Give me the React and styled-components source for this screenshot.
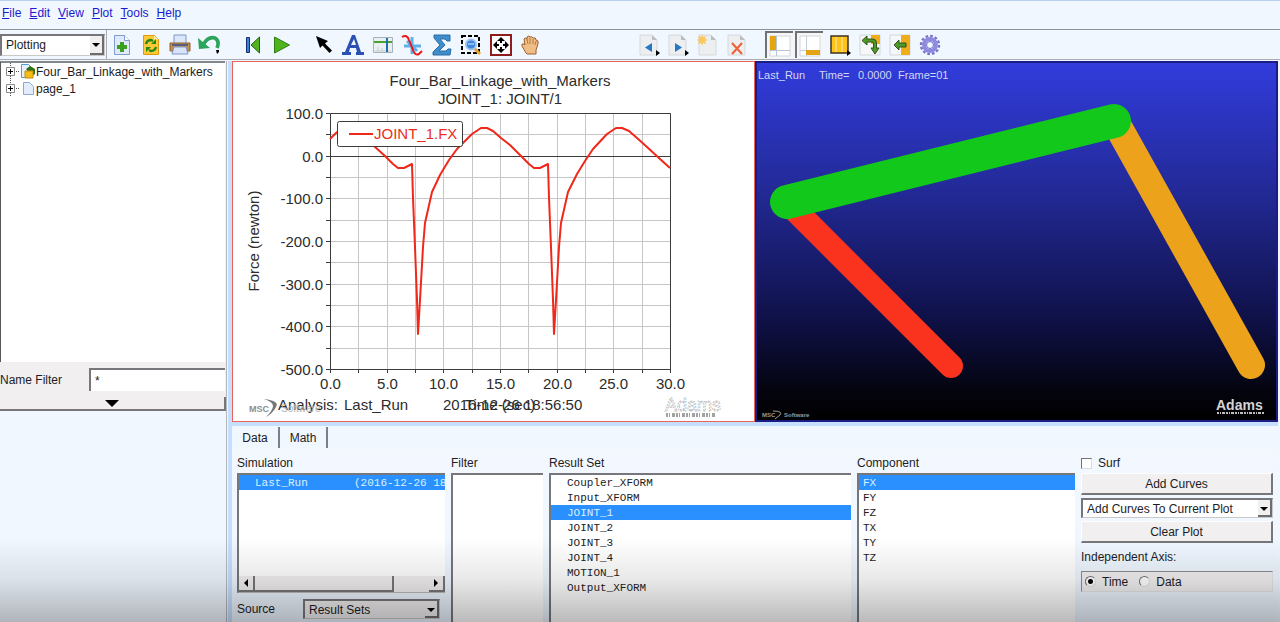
import React, { useState } from "react";
import styled, { createGlobalStyle } from "styled-components";

const GlobalStyle = createGlobalStyle`
  *, *::before, *::after { box-sizing: border-box; }
  body { margin: 0; background: #f0f7ff; }
  body, button, input, select {
    font-family: "Liberation Sans", Arial, sans-serif;
    font-size: 12px;
    color: #1c1c24;
  }
  ul { list-style: none; margin: 0; padding: 0; }
`;

const Page = styled.div`
  position: relative;
  display: flex;
  flex-direction: column;
  min-height: 100vh;
  overflow: hidden;
  background: #f0f7ff;
`;

const BottomShade = styled.div`
  position: absolute;
  left: 0;
  right: 0;
  bottom: 0;
  height: 84px;
  pointer-events: none;
  background: linear-gradient(rgba(0, 0, 0, 0), rgba(0, 0, 0, 0.09) 50%, rgba(0, 0, 0, 0.27));
`;

/* ---------- menu and toolbar ---------- */

const MenuBar = styled.nav`
  display: flex;
  gap: 8px;
  height: 29px;
  padding: 5px 2px 0;
  border-top: 1px solid #b9cfee;
`;

const MenuLink = styled.a`
  color: #1a1ad0;
  line-height: 14px;
  text-decoration: none;
`;

const Toolbar = styled.div`
  display: flex;
  align-items: center;
  height: 31px;
  margin-bottom: 1px;
  border-top: 1px solid #8e9299;
  border-bottom: 1px solid #a9adb3;
`;

const ToolGroup = styled.div`
  flex: none;
  display: grid;
  grid-template-columns: repeat(${(p) => p.$count}, 1fr);
  width: ${(p) => p.$width}px;
  height: 29px;
  margin-left: ${(p) => p.$gap}px;
  border-left: ${(p) => (p.$ruled ? "1px solid #a9adb3" : "0")};
`;

const ToolButton = styled.button`
  display: flex;
  align-items: center;
  justify-content: center;
  height: 27px;
  margin: ${(p) => (p.$pressed ? "1px 2px 0 0" : "1px 0 0")};
  padding: 0;
  border: 0 solid #707276;
  border-width: ${(p) => (p.$pressed ? "2px 0 0 2px" : "0")};
  background: ${(p) => (p.$pressed ? "#f6f6f6" : "transparent")};
`;

const SelectFrame = styled.span`
  position: relative;
  display: block;
  flex: none;
  width: ${(p) => p.$width};
  height: ${(p) => p.$height}px;
  border: 1px solid #c9c9c9;
  border-top: 2px solid #77777b;
  border-left: 2px solid #77777b;
  background: ${(p) => p.$fill || "#fff"};
  &::after {
    content: "";
    position: absolute;
    top: 0;
    right: 0;
    bottom: 0;
    width: 14px;
    pointer-events: none;
    border-right: 2px solid #6d6d70;
    border-bottom: 2px solid #6d6d70;
    background: #f1eff0;
  }
`;

const SelectArrow = styled.span`
  position: absolute;
  z-index: 1;
  top: 50%;
  right: 4px;
  margin-top: -2px;
  border: 4px solid transparent;
  border-top-color: #000;
  border-bottom: 0;
  pointer-events: none;
`;

const NativeSelect = styled.select`
  display: block;
  appearance: none;
  width: 100%;
  height: 100%;
  padding: 0 16px 0 4px;
  border: 0;
  border-radius: 0;
  outline: 0;
  background: transparent;
`;

/* ---------- main frame ---------- */

const Main = styled.div`
  flex: 1;
  display: flex;
  padding-right: 2px;
`;

const Sidebar = styled.aside`
  flex: none;
  display: flex;
  flex-direction: column;
  width: 227px;
  border-right: 1px solid #b4b7bc;
`;

const Work = styled.main`
  flex: 1;
  min-width: 0;
  display: flex;
  flex-direction: column;
  border-left: 4px solid #c6dfff;
  margin-left: 1px;
`;

const Tree = styled.ul`
  height: 301px;
  margin-right: 1px;
  border-top: 2px solid #85878a;
  border-left: 1px solid #55575a;
  background: #fff;
`;

const TreeRow = styled.li`
  display: flex;
  align-items: center;
  height: 17px;
  padding-left: 5px;
  white-space: nowrap;
`;

const FilterRow = styled.label`
  display: flex;
  align-items: center;
  justify-content: space-between;
  height: 35px;
  padding-right: 1px;
  background: #f1eff0;
`;

const FilterInput = styled.input`
  width: 136px;
  height: 23px;
  padding: 0 4px;
  border: 0 solid #77777b;
  border-width: 2px 0 0 2px;
  outline: 0;
  background: #fff;
`;

const CollapseButton = styled.button`
  display: flex;
  align-items: center;
  justify-content: center;
  height: 14px;
  padding: 0;
  border: 0 solid #77777b;
  border-width: 0 2px 2px 0;
  background: #f1eff0;
`;

const Views = styled.div`
  display: grid;
  grid-template-columns: 1fr 1fr;
  border-bottom: 4px solid #c6dfff;
`;

const PlotView = styled.section`
  height: 361px;
  border: 1px solid #e8645a;
  background: #fff;
`;

const AnimationView = styled.section`
  height: 361px;
  border: 2px solid #1c1c86;
  background: linear-gradient(#313cdc, #232a98 35%, #10124c 70%, #04040f 92%, #000);
`;

const Drawing = styled.svg`
  display: block;
  width: 100%;
  height: 100%;
  font-family: "Liberation Sans", Arial, sans-serif;
`;

/* ---------- data panel ---------- */

const Tabs = styled.div`
  display: flex;
  height: 24px;
  padding: 1px 0 2px;
`;

const Tab = styled.button`
  width: 48px;
  padding: 1px 0 0;
  border: 0;
  border-right: 2px solid #7d8086;
  background: transparent;
`;

const DataGrid = styled.div`
  flex: 1;
  display: grid;
  grid-template-columns: 208fr 92fr 302fr 218fr 192fr;
  gap: 6px;
  padding: 6px 5px 0;
  background: linear-gradient(#f3f8ff, #ecf5ff);
`;

const Column = styled.div`
  display: flex;
  flex-direction: column;
  gap: 3px;
  min-width: 0;
`;

const ColumnTitle = styled.div`
  line-height: 14px;
`;

const ListBox = styled.ul`
  flex: ${(p) => (p.$fill ? "1" : "none")};
  height: ${(p) => (p.$fill ? "auto" : "103px")};
  overflow: hidden;
  border: 0 solid #77777b;
  border-width: 2px 0 0 2px;
  background: #fff;
`;

const ListItem = styled.li`
  height: 15px;
  padding-left: ${(p) => p.$indent}px;
  overflow: hidden;
  font: 11px/17px "Liberation Mono", "Courier New", monospace;
  white-space: pre;
  color: ${(p) => (p.$selected ? "#d9f0ff" : "#1c1c24")};
  background: ${(p) => (p.$selected ? "#2a90ff" : "transparent")};
`;

const ScrollTrack = styled.div`
  display: flex;
  height: 17px;
  border-left: 2px solid #77777b;
  border-bottom: 1px solid #b8b8b8;
  background: #f1eff0;
`;

const ScrollButton = styled.button`
  display: flex;
  align-items: center;
  justify-content: center;
  width: 16px;
  padding: 0;
  border: 0 solid #77777b;
  border-width: 0 2px 2px 0;
  background: #f1eff0;
`;

const ScrollSpace = styled.div`
  flex: 1;
`;

const ScrollThumb = styled.div`
  width: 80%;
  height: 16px;
  border: 0 solid #77777b;
  border-width: 0 2px 2px 0;
`;

const SourceRow = styled.label`
  display: flex;
  align-items: center;
  justify-content: space-between;
  padding: 3px 5px 0 0;
`;

const PushButton = styled.button`
  height: 22px;
  padding: 0;
  border: 1px solid #fdfdfd;
  border-right: 2px solid #77777b;
  border-bottom: 2px solid #77777b;
  background: #f1eff0;
`;

const Stack = styled.div`
  display: flex;
  flex-direction: column;
  gap: 3px;
`;

const CheckLabel = styled.label`
  display: flex;
  align-items: center;
  gap: 6px;
  height: 14px;
`;

const CheckInput = styled.input`
  appearance: none;
  width: 11px;
  height: 11px;
  margin: 0;
  border: 1px solid #dcdcdc;
  border-top-color: #707276;
  border-left-color: #707276;
  background: #fff;
  &:checked { background: #333; }
`;

const AxisSet = styled.fieldset`
  min-width: 0;
  margin: 4px 0 0;
  padding: 0;
  border: 0;
`;

const AxisLegend = styled.legend`
  padding: 0 0 7px;
  line-height: 14px;
`;

const AxisOptions = styled.div`
  display: flex;
  align-items: center;
  gap: 11px;
  height: 21px;
  padding-left: 3px;
  border: 1px solid #e4e4e4;
  border-top-color: #8b8d92;
  border-left-color: #8b8d92;
  background: #f1eff0;
`;

const RadioInput = styled.input`
  appearance: none;
  width: 11px;
  height: 11px;
  margin: 0;
  border: 1px solid #e0e0e0;
  border-top-color: #707276;
  border-left-color: #707276;
  border-radius: 50%;
  background: #fff;
  &:checked { background: radial-gradient(circle, #000 0 2px, #fff 3px); }
`;

/* ---------- toolbar icons ---------- */

const Icon = ({ children }) => (
  <svg width="22" height="22" viewBox="0 0 22 22" fill="none" aria-hidden="true">
    {children}
  </svg>
);

const more = <path d="M18 16l4 3-4 3z" fill="#000" />;
const greySheet = (
  <>
    <path d="M2 1h12l5 5v15H2z" fill="#eceef0" stroke="#d6d9dc" />
    <path d="M14 1v5h5z" fill="#b9bdc2" />
  </>
);

const icons = {
  newPage: (
    <Icon>
      <path d="M3.500 1.500h10l5 5v14h-15z" fill="#dfe9fb" stroke="#7e9cd0" />
      <path d="M13.500 1.500v5h5" fill="#fff" stroke="#7e9cd0" />
      <path d="M9 8h4v3h3v4h-3v3H9v-3H6v-4h3z" fill="#38a01c" />
    </Icon>
  ),
  reload: (
    <Icon>
      <path d="M3.500 1.500h11l4 4v15h-15z" fill="#ffc935" stroke="#e09a10" />
      <path d="M14 1.500v4h4.500z" fill="#fff1bf" />
      <path d="M6 10q1-4 5-4l2 1M16 13q-1 4-5 4l-2-1" stroke="#278a16" strokeWidth="2.400" />
      <path d="M11 10l5 0V5zM11 13H6v5z" fill="#278a16" />
    </Icon>
  ),
  print: (
    <Icon>
      <path d="M5 1h12v9H5z" fill="#dce6fa" stroke="#7e97c4" />
      <path d="M1 9h20v8H1z" fill="#c58d4e" stroke="#8a6236" />
      <path d="M3 11h16" stroke="#54617c" strokeWidth="2" />
      <path d="M5 13h12l2 7H3z" fill="#d7e4fb" stroke="#7e97c4" />
    </Icon>
  ),
  undo: (
    <Icon>
      <path d="M5 11Q10 2 17 4q5 3 2 10" stroke="#2ca45c" strokeWidth="3.600" />
      <path d="M0 4l1 11 11-1z" fill="#2ca45c" />
      <path d="M18 16h3v2l-2 2z" fill="#000" />
    </Icon>
  ),
  rewind: (
    <Icon>
      <path d="M4.500 3.500h3v15h-3z" fill="#3b82d8" stroke="#15306e" />
      <path d="M17.500 3v16L9 11z" fill="#52b31f" stroke="#24610c" />
    </Icon>
  ),
  play: (
    <Icon>
      <path d="M3.500 3v16l15-8z" fill="#4fb31c" stroke="#2f7d12" />
    </Icon>
  ),
  pointer: (
    <Icon>
      <path d="M3 2l4 12 2.500-2.500 7 7.500 2.500-2.500-7-7L15 7z" fill="#000" />
    </Icon>
  ),
  text: (
    <Icon>
      <path
        fillRule="evenodd"
        d="M10 1h3l6 17h3v3h-8v-3h1l-1-4H8l-1 4h2v3H0v-3h3zM9 11h5l-2-6z"
        fill="#2c4fb4"
      />
    </Icon>
  ),
  table: (
    <Icon>
      <path d="M1.500 3.500h19v15h-19z" fill="#eaf0f2" stroke="#a7b2ba" />
      <path d="M6 13v4M10 14v3M3 17h16" stroke="#c2cbce" />
      <path d="M2 8h18" stroke="#4ba32c" strokeWidth="2" />
      <path d="M15 4v14" stroke="#1f6db4" strokeWidth="2" />
    </Icon>
  ),
  curve: (
    <Icon>
      <path d="M11 3v17M3 12h17M6 7l10 10" stroke="#5fb0e8" strokeWidth="3" />
      <path d="M1 3q5-3 7 3l4 10q2 6 6 4l3-3" stroke="#e81818" strokeWidth="2" />
    </Icon>
  ),
  sigma: (
    <Icon>
      <path
        d="M3 1h16v6h-3l-2-2H9l5 6-6 6h7l2-2h3l-1 6H2v-3l7-7-6-7z"
        fill="#3f8dca"
        stroke="#2a6da8"
      />
    </Icon>
  ),
  zoom: (
    <Icon>
      <path d="M2 2h17v17H2z" stroke="#000" strokeWidth="2" strokeDasharray="4 2" />
      <path d="M14 14l6 6" stroke="#e7a437" strokeWidth="3" />
      <circle cx="11" cy="10.500" r="5" fill="#3f86dc" stroke="#9cc3ee" strokeWidth="2" />
      <path d="M8 10h6" stroke="#8dbcf2" strokeWidth="2" />
    </Icon>
  ),
  fit: (
    <Icon>
      <path d="M1 1h20v20H1z" fill="#fff" stroke="#8e1c1c" strokeWidth="2" />
      <path
        d="M11 3l4 4h-3v2h-2V7H7zM11 19l4-4h-3v-2h-2v2H7zM3 11l4-4v3h2v2H7v3zM19 11l-4-4v3h-2v2h2v3z"
        fill="#000"
      />
    </Icon>
  ),
  hand: (
    <Icon>
      <path
        d="M7 19l-4-7q-1-3 2-2l1 1-1-6q1-2 3 0l0-2q2-2 3 0 2-1 3 1 3-1 3 2 3 0 2 4l-2 6v4H8z"
        fill="#f0bd84"
        stroke="#9a6230"
      />
      <path d="M8 5l1 5M11 4v6M14 5v5M17 7l-1 4" stroke="#b27b45" />
    </Icon>
  ),
  pagePrev: (
    <Icon>
      {greySheet}
      <path d="M14 9v9l-7-4.500z" fill="#2379c4" />
      {more}
    </Icon>
  ),
  pageNext: (
    <Icon>
      {greySheet}
      <path d="M8 9v9l7-4.500z" fill="#2379c4" />
      {more}
    </Icon>
  ),
  pageNew: (
    <Icon>
      {greySheet}
      <path d="M5 0l1 3 3-1-1 3 3 1-3 1 1 3-3-1-1 3-1-3-3 1 1-3-3-1 3-1-1-3 3 1z" fill="#f8c95c" />
    </Icon>
  ),
  pageDelete: (
    <Icon>
      {greySheet}
      <path d="M6 9l10 11M16 9L6 20" stroke="#ee6135" strokeWidth="2" />
    </Icon>
  ),
  paneLeft: (
    <Icon>
      <path d="M1 1h20v20H1z" fill="#fff" stroke="#d2d7dc" />
      <path d="M1 1h6v14H1z" fill="#e5a414" />
      <path d="M7.500 1v20M1 15.500h20" stroke="#b6c6d6" />
    </Icon>
  ),
  paneBottom: (
    <Icon>
      <path d="M1 1h20v20H1z" fill="#fff" stroke="#d2d7dc" />
      <path d="M7.500 1v20M1 15.500h20" stroke="#c3d0dc" />
      <path d="M7 15h14v5H7z" fill="#e5a414" />
    </Icon>
  ),
  layout: (
    <Icon>
      <path d="M2 2h17v17H2z" fill="#ffc21a" stroke="#3c3423" strokeWidth="1.500" />
      <path d="M7 3v15M13 3v15" stroke="#ffd763" strokeWidth="2" />
      {more}
    </Icon>
  ),
  swap: (
    <Icon>
      <path d="M1 1h20v20H1z" fill="#f5f7f8" stroke="#d2d7dc" />
      <path d="M12 1h9v9h-9z" fill="#efad1c" />
      <path d="M7 6.500h6q3 0 3 3V15" stroke="#33551b" strokeWidth="4" />
      <path d="M8 2v9L3 6.500zM12 14h8l-4 6z" fill="#4c9a28" stroke="#33551b" />
      <path d="M7 6.500h6q3 0 3 3V15" stroke="#4c9a28" strokeWidth="2" />
    </Icon>
  ),
  moveLeft: (
    <Icon>
      <path d="M1 1h20v20H1z" fill="#f5f7f8" stroke="#d2d7dc" />
      <path d="M12 1h9v20h-9z" fill="#efad1c" />
      <path d="M5 11l5-5v3h7v4h-7v3z" fill="#4c9a28" stroke="#33551b" />
    </Icon>
  ),
  gear: (
    <Icon>
      <circle cx="11" cy="11" r="9" stroke="#7672cc" strokeWidth="2.400" strokeDasharray="2.700 2" />
      <circle cx="11" cy="11" r="6" stroke="#8d8ae0" strokeWidth="4" />
      <circle cx="11" cy="11" r="3.500" fill="#f0f7ff" stroke="#6d69c4" />
    </Icon>
  ),
};

const toolGroups = [
  { width: 118, gap: 1, ruled: true, tools: [["newPage", "New"], ["reload", "Reload"], ["print", "Print"], ["undo", "Undo"]] },
  { width: 59, gap: 14, tools: [["rewind", "Rewind"], ["play", "Play"]] },
  {
    width: 236,
    gap: 12,
    tools: [
      ["pointer", "Select"], ["text", "Text"], ["table", "Plot tracking"], ["curve", "Curve edit"],
      ["sigma", "Statistics"], ["zoom", "Zoom"], ["fit", "Fit"], ["hand", "Pan"],
    ],
  },
  {
    width: 118,
    gap: 89,
    tools: [["pagePrev", "Previous page"], ["pageNext", "Next page"], ["pageNew", "New page"], ["pageDelete", "Delete page"]],
  },
  {
    width: 180,
    gap: 13,
    tools: [
      ["paneLeft", "Tree pane", true], ["paneBottom", "Data pane", true], ["layout", "Page layout"],
      ["swap", "Swap views"], ["moveLeft", "Expand view"], ["gear", "Settings"],
    ],
  },
];

const MenuItem = ({ name }) => (
  <MenuLink href={`#${name.toLowerCase()}`}>
    <u>{name[0]}</u>
    {name.slice(1)}
  </MenuLink>
);

const Select = ({ options, label, width = "100%", height = 20, fill, id }) => (
  <SelectFrame $width={width} $height={height} $fill={fill}>
    <NativeSelect id={id} aria-label={label}>
      {options.map((o) => (
        <option key={o}>{o}</option>
      ))}
    </NativeSelect>
    <SelectArrow />
  </SelectFrame>
);

/* ---------- tree ---------- */

const TreeGlyph = ({ model }) => (
  <svg width="30" height="17" viewBox="0 0 30 17" fill="none" aria-hidden="true">
    <path d="M4.500 0v4M4.500 13v4M10 8.500h4" stroke="#555" strokeDasharray="1 1" />
    <path d="M.5 4.500h8v8h-8z" fill="#fff" stroke="#8a8a8a" />
    <path d="M2 8.500h5M4.500 6v5" stroke="#000" />
    {model ? (
      <>
        <path d="M15.500 1.500h7l4 4v9h-11z" fill="#e7f1fd" stroke="#4f9ad8" />
        <path d="M20 6l4-3 5 3v5l-3 2z" fill="#2f6f1c" />
        <path d="M19 8h8v7h-8z" fill="#f4bd12" stroke="#c78c08" />
      </>
    ) : (
      <path d="M17.500 2.500h6l4 4v8h-10z" fill="#e3ecfb" stroke="#8fa9d6" />
    )}
  </svg>
);

/* ---------- force plot ---------- */

const forceCurve = [
  [330, 139], [336, 133], [342, 128], [349, 128], [359, 134], [374, 146], [385, 156], [393, 164],
  [398, 168], [404, 168], [408, 166], [412, 164], [413, 198], [415, 247], [417, 300], [418, 334],
  [420, 300], [423, 247], [425, 223], [432, 192], [440, 175], [449, 160], [457, 149], [463, 143],
  [472, 134], [481, 128], [487, 128], [493, 131], [501, 138], [510, 145], [521, 156], [529, 164],
  [534, 168], [540, 168], [544, 166], [548, 164], [549, 198], [551, 247], [553, 300], [554, 334],
  [556, 300], [559, 247], [561, 223], [568, 192], [577, 174], [585, 161], [593, 149], [607, 134],
  [616, 128], [622, 128], [629, 131], [637, 138], [647, 147], [660, 159], [670, 168],
];

const xAt = (v) => Math.round(330 + (v * 340) / 30) + 0.5;
const yAt = (v) => Math.round(113 + ((100 - v) * 256) / 600) + 0.5;
const xSteps = Array.from({ length: 13 }, (_, i) => i * 2.5);
const ySteps = Array.from({ length: 13 }, (_, i) => 100 - i * 50);

const ForcePlot = () => (
  <Drawing viewBox="233 62 521 359" role="img" aria-label="Force plot of JOINT_1">
    <g stroke="#c6c6c6">
      {xSteps.map((v) => <path key={v} d={`M${xAt(v)} 113V369`} />)}
      {ySteps.map((v) => <path key={v} d={`M330 ${yAt(v)}H670`} />)}
    </g>
    <g stroke="#3c3c3c" fill="none">
      <path d="M330.500 113.500H670.500V369.500H330.500z" />
      <path d="M330 156.500H670" />
      {xSteps.map((v) => <path key={v} d={`M${xAt(v)} 369v4`} />)}
      {ySteps.map((v) => <path key={v} d={`M326 ${yAt(v)}h4`} />)}
    </g>
    <polyline points={forceCurve.join(" ")} fill="none" stroke="#f0281a" strokeWidth="2" strokeLinejoin="round" />
    <rect x="337.500" y="121.500" width="125" height="25" rx="2" fill="#fff" stroke="#3c3c3c" />
    <path d="M349 134h24" stroke="#f0281a" strokeWidth="2" />
    <g fontSize="15" fill="#2c2c2c">
      <text x="374" y="139" fill="#e8301f">JOINT_1.FX</text>
      <text x="500" y="86" textAnchor="middle">Four_Bar_Linkage_with_Markers</text>
      <text x="500" y="104" textAnchor="middle">JOINT_1: JOINT/1</text>
      {ySteps.filter((v) => v % 100 === 0).map((v) => (
        <text key={v} x="323" y={yAt(v) + 5} textAnchor="end">{v.toFixed(1)}</text>
      ))}
      {xSteps.filter((v) => v % 5 === 0).map((v) => (
        <text key={v} x={xAt(v)} y="389" textAnchor="middle">{v.toFixed(1)}</text>
      ))}
      <text transform="translate(259 241) rotate(-90)" textAnchor="middle">Force (newton)</text>
      <text x="278" y="410">Analysis:</text>
      <text x="344" y="410">Last_Run</text>
      <text x="443" y="410">2016-12-26 18:56:50</text>
      <text x="500" y="410" textAnchor="middle">Time (sec)</text>
    </g>
    <g fill="#8c8c8c">
      <text x="249" y="412" fontSize="9" fontWeight="bold">MSC</text>
      <text x="281" y="412" fontSize="10" fill="#b4b4b4">Software</text>
    </g>
    <path d="M264 399q16 2 12 8-3 6-10 10 7-7 7-11 0-4-9-7z" fill="#777" />
    <text x="665" y="411" fontSize="18" fill="#fff" stroke="#b9b9b9" strokeWidth="0.800" strokeDasharray="2 1">Adams</text>
    <path d="M666 415h50" stroke="#a2a2a2" strokeWidth="4" strokeDasharray="2 1 1 2 3 1" />
  </Drawing>
);

/* ---------- linkage animation ---------- */

const LinkageScene = () => (
  <Drawing viewBox="757 63 519 357" role="img" aria-label="Four bar linkage animation">
    <g strokeLinecap="round">
      <path d="M787 202L951 366" stroke="#f9331d" strokeWidth="24" />
      <path d="M1115 121L1251 365" stroke="#eda21c" strokeWidth="28" />
      <path d="M787 202L1114 121" stroke="#12c81a" strokeWidth="34" />
    </g>
    <g fontSize="11" fill="#d3d6f6">
      <text x="758" y="79">Last_Run</text>
      <text x="819" y="79">Time=</text>
      <text x="858" y="79">0.0000</text>
      <text x="898" y="79">Frame=01</text>
    </g>
    <g fill="#9a9a9a" fontSize="6" fontWeight="bold">
      <text x="762" y="417">MSC</text>
      <text x="784" y="417">Software</text>
    </g>
    <path d="M773 411q10 0 7 4l-5 4" stroke="#9a9a9a" fill="none" />
    <text x="1216" y="410" fontSize="14" fontWeight="bold" fill="#d4d4d4">Adams</text>
    <path d="M1217 413h47" stroke="#bcbcbc" strokeWidth="2" strokeDasharray="2 1 1 1 3 1" />
  </Drawing>
);

const List = ({ label, items, initial, indent = 4, fill = true }) => {
  const [selected, setSelected] = useState(initial);
  return (
    <ListBox role="listbox" aria-label={label} $fill={fill}>
      {items.map((item) => (
        <ListItem
          key={item}
          role="option"
          aria-selected={item === selected}
          $selected={item === selected}
          $indent={indent}
          onClick={() => setSelected(item)}
        >
          {item}
        </ListItem>
      ))}
    </ListBox>
  );
};

const runName = "Last_Run       (2016-12-26 18";
const resultSets = [
  "Coupler_XFORM", "Input_XFORM", "JOINT_1", "JOINT_2", "JOINT_3", "JOINT_4", "MOTION_1", "Output_XFORM",
];

export default function App() {
  return (
    <Page>
      <GlobalStyle />
      <MenuBar>
        {["File", "Edit", "View", "Plot", "Tools", "Help"].map((m) => (
          <MenuItem key={m} name={m} />
        ))}
      </MenuBar>
      <Toolbar>
        <Select label="Mode" options={["Plotting"]} width="105px" height={22} />
        {toolGroups.map((g) => (
          <ToolGroup key={g.tools[0][0]} $count={g.tools.length} $width={g.width} $gap={g.gap} $ruled={g.ruled}>
            {g.tools.map(([icon, label, pressed]) => (
              <ToolButton key={icon} aria-label={label} $pressed={pressed}>
                {icons[icon]}
              </ToolButton>
            ))}
          </ToolGroup>
        ))}
      </Toolbar>
      <Main>
        <Sidebar>
          <Tree>
            <TreeRow><TreeGlyph model />Four_Bar_Linkage_with_Markers</TreeRow>
            <TreeRow><TreeGlyph />page_1</TreeRow>
          </Tree>
          <FilterRow>
            Name Filter
            <FilterInput defaultValue="*" />
          </FilterRow>
          <CollapseButton aria-label="Collapse">
            <svg width="14" height="7" viewBox="0 0 14 7" aria-hidden="true">
              <path d="M0 0h14L7 7z" />
            </svg>
          </CollapseButton>
        </Sidebar>
        <Work>
          <Views>
            <PlotView><ForcePlot /></PlotView>
            <AnimationView><LinkageScene /></AnimationView>
          </Views>
          <Tabs role="tablist">
            <Tab role="tab" aria-selected="true">Data</Tab>
            <Tab role="tab" aria-selected="false">Math</Tab>
          </Tabs>
          <DataGrid>
            <Column>
              <ColumnTitle>Simulation</ColumnTitle>
              <div>
                <List label="Simulation" items={[runName]} initial={runName} indent={16} fill={false} />
                <ScrollTrack>
                  <ScrollButton aria-label="Scroll left">
                    <svg width="4" height="8" viewBox="0 0 4 8" aria-hidden="true"><path d="M4 0v8L0 4z" /></svg>
                  </ScrollButton>
                  <ScrollSpace><ScrollThumb /></ScrollSpace>
                  <ScrollButton aria-label="Scroll right">
                    <svg width="4" height="8" viewBox="0 0 4 8" aria-hidden="true"><path d="M0 0v8l4-4z" /></svg>
                  </ScrollButton>
                </ScrollTrack>
              </div>
              <SourceRow htmlFor="source">
                Source
                <Select id="source" options={["Result Sets"]} width="137px" fill="#f1eff0" />
              </SourceRow>
            </Column>
            <Column>
              <ColumnTitle>Filter</ColumnTitle>
              <List label="Filter" items={[]} />
            </Column>
            <Column>
              <ColumnTitle>Result Set</ColumnTitle>
              <List label="Result Set" items={resultSets} initial="JOINT_1" indent={16} />
            </Column>
            <Column>
              <ColumnTitle>Component</ColumnTitle>
              <List label="Component" items={["FX", "FY", "FZ", "TX", "TY", "TZ"]} initial="FX" />
            </Column>
            <Column>
              <CheckLabel><CheckInput type="checkbox" />Surf</CheckLabel>
              <Stack>
                <PushButton>Add Curves</PushButton>
                <Select label="Curve target" options={["Add Curves To Current Plot"]} />
                <PushButton>Clear Plot</PushButton>
              </Stack>
              <AxisSet>
                <AxisLegend>Independent Axis:</AxisLegend>
                <AxisOptions>
                  <CheckLabel><RadioInput type="radio" name="axis" defaultChecked />Time</CheckLabel>
                  <CheckLabel><RadioInput type="radio" name="axis" />Data</CheckLabel>
                </AxisOptions>
              </AxisSet>
            </Column>
          </DataGrid>
        </Work>
      </Main>
      <BottomShade />
    </Page>
  );
}
